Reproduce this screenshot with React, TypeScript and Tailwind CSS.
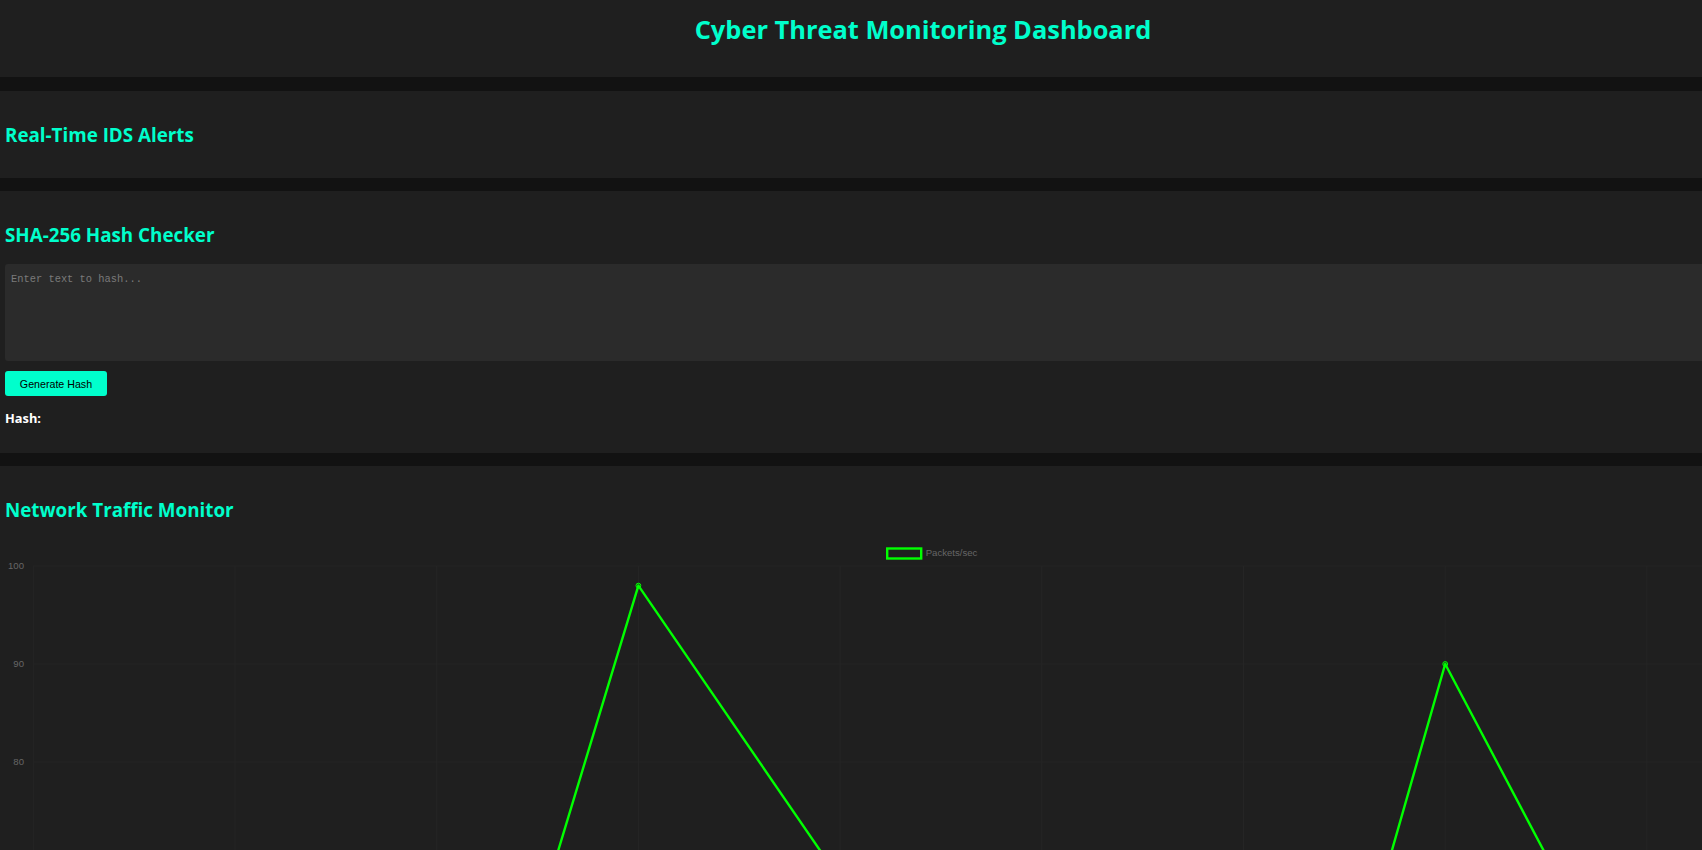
const traffic = [45, 60, 30, 98, 68, 40, 18, 90, 51, 65];

// chart geometry, in svg coords (svg sits 5px in from the page edge)
const X0 = 28.3;
const STEP = 201.7;
const Y_TOP = 36;
const PX_PER_UNIT = 9.8;

const yFor = (v: number) => Y_TOP + (100 - v) * PX_PER_UNIT;

const TrafficChart = () => {
  const gridTicks = [100, 90, 80, 70, 60, 50, 40, 30, 20, 10, 0];
  // only the top of the chart fits on screen
  const labelTicks = [100, 90, 80];
  const points = traffic.map((v, i) => [X0 + i * STEP, yFor(v)]);

  return (
    <svg width={1836} height={320} className="block mt-[8px]">
      {/* grid */}
      {gridTicks.map((t) => (
        <line
          key={`h${t}`}
          x1={X0}
          x2={X0 + (traffic.length - 1) * STEP}
          y1={yFor(t)}
          y2={yFor(t)}
          stroke="#252525"
          strokeWidth={1}
        />
      ))}
      {traffic.map((_, i) => (
        <line
          key={`v${i}`}
          x1={X0 + i * STEP}
          x2={X0 + i * STEP}
          y1={Y_TOP}
          y2={yFor(0)}
          stroke="#252525"
          strokeWidth={1}
        />
      ))}

      {/* y axis labels */}
      {labelTicks.map((t) => (
        <text
          key={`l${t}`}
          x={19}
          y={yFor(t) + 3.4}
          textAnchor="end"
          fill="#666666"
          fontSize={9.6}
          fontFamily="'Liberation Sans', Arial, sans-serif"
        >
          {t}
        </text>
      ))}

      {/* legend */}
      <rect x={882.2} y={18.5} width={34} height={10} fill="none" stroke="#00ff00" strokeWidth={2.4} />
      <text
        x={920.7}
        y={26.4}
        fill="#666666"
        fontSize={9.6}
        fontFamily="'Liberation Sans', Arial, sans-serif"
      >
        Packets/sec
      </text>

      {/* data line */}
      <polyline
        points={points.map((p) => p.join(",")).join(" ")}
        fill="none"
        stroke="#00ff00"
        strokeWidth={2.4}
        strokeLinejoin="round"
      />
      {points.map(([x, y], i) => (
        <circle key={i} cx={x} cy={y} r={2.4} fill="rgba(0,255,0,0.15)" stroke="#00ff00" strokeWidth={1} />
      ))}
    </svg>
  );
};

const SectionTitle = ({ children }: { children: React.ReactNode }) => (
  <h2 className="text-[18.8px] leading-[24px] font-bold text-[#00ffcc]">{children}</h2>
);

const App = () => {
  return (
    <div
      className="h-screen w-screen overflow-hidden bg-[#121212]"
      style={{ fontFamily: "'Open Sans', 'Noto Sans', sans-serif" }}
    >
      <div className="w-[1846px]">
        <header className="h-[77px] bg-[#1f1f1f] pt-[14px] text-center">
          <h1 className="text-[25.4px] leading-[30px] font-bold text-[#00ffcc]">
            Cyber Threat Monitoring Dashboard
          </h1>
        </header>

        <section className="mt-[14px] bg-[#1f1f1f] px-[5px] pt-[32px] pb-[31px]">
          <SectionTitle>Real-Time IDS Alerts</SectionTitle>
        </section>

        <section className="mt-[13px] bg-[#1f1f1f] px-[5px] pt-[32px] pb-[27px]">
          <SectionTitle>SHA-256 Hash Checker</SectionTitle>
          <textarea
            placeholder="Enter text to hash..."
            className="mt-[17px] block h-[97px] w-full resize-none rounded-[3px] bg-[#2b2b2b] px-[6px] pt-[8px] text-[10.4px] text-white placeholder:text-[#7a7a7a] outline-none"
            style={{ fontFamily: "'Liberation Mono', monospace" }}
          />
          <button
            className="mt-[10px] block h-[25px] w-[102px] rounded-[3px] bg-[#00ffcc] text-[10.67px] text-black"
            style={{ fontFamily: "'Liberation Sans', Arial, sans-serif" }}
          >
            Generate Hash
          </button>
          <p className="mt-[14px] text-[12.8px] leading-[16px] font-bold text-white">Hash:</p>
        </section>

        <section className="mt-[13px] bg-[#1f1f1f] px-[5px] pt-[32px]">
          <SectionTitle>Network Traffic Monitor</SectionTitle>
          <TrafficChart />
        </section>
      </div>
    </div>
  );
};

export default App;
